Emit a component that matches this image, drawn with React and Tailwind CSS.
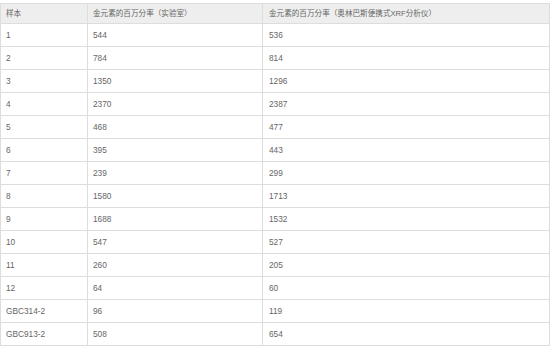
import React from 'react';

const rows = [
  ['1', '544', '536'],
  ['2', '784', '814'],
  ['3', '1350', '1296'],
  ['4', '2370', '2387'],
  ['5', '468', '477'],
  ['6', '395', '443'],
  ['7', '239', '299'],
  ['8', '1580', '1713'],
  ['9', '1688', '1532'],
  ['10', '547', '527'],
  ['11', '260', '205'],
  ['12', '64', '60'],
  ['GBC314-2', '96', '119'],
  ['GBC913-2', '508', '654'],
];

const App = () => {
  return (
    <div className="w-[553px] h-[347px] bg-white pt-[3px] overflow-hidden" style={{ fontFamily: '"Liberation Sans", "Noto Sans CJK SC", sans-serif' }}>
      <table className="w-[549px] border-collapse table-fixed text-[8.3px] text-[#666]">
        <colgroup>
          <col className="w-[87px]" />
          <col className="w-[175px]" />
          <col className="w-[287px]" />
        </colgroup>
        <thead>
          <tr className="h-[20px] bg-[#eeeeee] text-[7.6px]">
            <th className="border border-[#ddd] px-[5px] text-left font-normal">样本</th>
            <th className="border border-[#ddd] px-[5px] text-left font-normal">金元素的百万分率（实验室）</th>
            <th className="border border-[#ddd] px-[6px] text-left font-normal">金元素的百万分率（奥林巴斯便携式XRF分析仪）</th>
          </tr>
        </thead>
        <tbody>
          {rows.map((r) => (
            <tr key={r[0]} className="h-[23px]">
              <td className="border border-[#ddd] px-[5px]">{r[0]}</td>
              <td className="border border-[#ddd] px-[5px]">{r[1]}</td>
              <td className="border border-[#ddd] px-[6px]">{r[2]}</td>
            </tr>
          ))}
        </tbody>
      </table>
    </div>
  );
};

export default App;
